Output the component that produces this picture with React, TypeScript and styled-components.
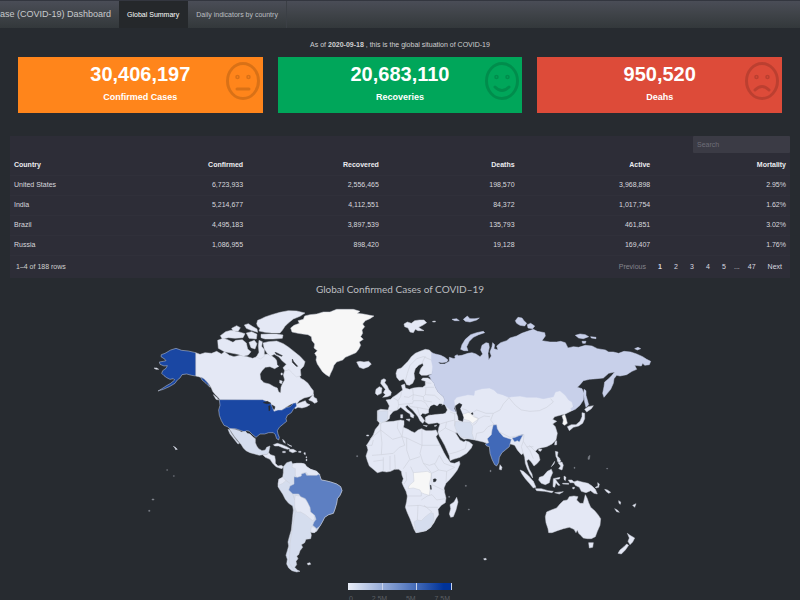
import React from "react";
import styled, { createGlobalStyle } from "styled-components";

const GlobalStyle = createGlobalStyle`
  * { box-sizing: border-box; }
  body {
    margin: 0;
    background: #272b30;
    color: #d0d0d0;
    font-family: "Liberation Sans", Arial, sans-serif;
    font-size: 7px;
    line-height: 10px;
  }
`;

const Page = styled.div`
  height: 100vh;
  overflow: hidden;
  display: flex;
  flex-direction: column;
`;

const Navbar = styled.nav`
  flex: none;
  display: flex;
  height: 28px;
  border-top: 1px solid #33363f;
  background: linear-gradient(#4a4d57, #3f4348 50%, #33383b);
`;

const Brand = styled.span`
  padding-right: 8px;
  font-size: 9px;
  line-height: 27px;
  white-space: nowrap;
  color: #c8cacc;
`;

const NavLink = styled.a<{ $active?: boolean }>`
  padding: 0 8px;
  line-height: 27px;
  text-decoration: none;
  white-space: nowrap;
  border-right: 1px solid ${(p) => (p.$active ? "#25282b" : "#3b3f45")};
  color: ${(p) => (p.$active ? "#ffffff" : "#bcbfc2")};
  background: ${(p) => (p.$active ? "#25282b" : "transparent")};
`;

const Summary = styled.p`
  flex: none;
  margin: 12px 0 7px;
  text-align: center;
`;

const Cards = styled.section`
  flex: none;
  display: grid;
  grid-template-columns: repeat(3, 1fr);
  gap: 15px;
  padding: 0 18px;
`;

const Card = styled.article<{ $color: string }>`
  position: relative;
  height: 56px;
  padding-top: 6px;
  text-align: center;
  font-weight: bold;
  color: #ffffff;
  background: ${(p) => p.$color};
`;

const CardValue = styled.div`
  font-size: 20px;
  line-height: 22px;
`;

const CardLabel = styled.div`
  margin-top: 5px;
  font-size: 9px;
  line-height: 14px;
`;

const Face = styled.svg`
  position: absolute;
  top: 4px;
  right: 2px;
  width: 36px;
  height: 40px;
  fill: none;
  stroke: rgba(0, 0, 0, 0.15);
  stroke-width: 3;
  stroke-linecap: round;
`;

const Panel = styled.section`
  flex: none;
  margin: 23px 10px 0;
  height: 142px;
  background: #2d2d37;
`;

const SearchBar = styled.div`
  display: flex;
  justify-content: flex-end;
`;

const SearchInput = styled.input`
  width: 97px;
  height: 17px;
  padding: 0 4px;
  border: 0;
  border-radius: 1px;
  background: #3b3b45;
  color: #c8c8c8;
  font: inherit;
  &::placeholder { color: #6e6e78; }
`;

const Table = styled.table`
  width: 100%;
  margin-top: 2px;
  table-layout: fixed;
  border-collapse: collapse;
`;

const Cell = styled.td`
  height: 20px;
  padding: 0 4px;
  border-bottom: 1px solid #30303a;
  text-align: right;
  color: #d8d8de;
  &:first-child { text-align: left; }
`;

const HeadCell = styled(Cell).attrs({ as: "th" })`
  font-weight: bold;
  color: #ececf0;
  &:first-child { width: 13%; }
`;

const Footer = styled.div`
  display: flex;
  align-items: center;
  justify-content: space-between;
  height: 22px;
  padding: 0 2px 0 6px;
`;

const Pages = styled.div`
  display: flex;
  align-items: center;
`;

const PageButton = styled.button<{ $current?: boolean }>`
  min-width: 16px;
  padding: 0 6px;
  border: 0;
  background: none;
  font: inherit;
  font-weight: ${(p) => (p.$current ? "bold" : "normal")};
  color: #dadae0;
  &:disabled { color: #85858d; }
`;

const Ellipsis = styled.span`
  padding: 0 2px;
`;

const MapTitle = styled.h2`
  flex: none;
  margin: 4px 0 0;
  text-align: center;
  font: 400 10px/14px Lato, sans-serif;
  color: #bcbec0;
`;

const WorldMap = styled.svg`
  flex: none;
  display: block;
  width: 100%;
  margin-top: 4px;
`;

const Legend = styled.div`
  flex: none;
  align-self: center;
  margin-top: 5px;
  width: 104px;
`;

const Scale = styled.div`
  display: grid;
  grid-template-columns: repeat(3, 1fr);
  height: 7px;
  background: linear-gradient(90deg, #e9edf7, #6c8bc8 50%, #003399 92%);
`;

const Tick = styled.span`
  border-right: 1px solid #c9d3ea;
`;

const ScaleLabels = styled.div`
  display: flex;
  justify-content: space-between;
  padding: 4px 2px 0 1px;
  color: #5b5f63;
`;

const LIGHT = "#e4e8f5";
const SOFT = "#d5ddee";
const BLANK = "#f7f7f7";
const RUSSIA = "#c8d0ea";
const BRAZIL = "#5d7fc2";
const INDIA = "#4169b8";
const USA = "#1a47a3";
const SEA = "#272b30";

type Shape = [fill: string, ...outlines: string[]];

interface Sheet {
  x: number;
  y: number;
  shapes: Shape[];
  borders?: string;
}

const sheets: Sheet[] = [
  {
    // North America
    x: 150,
    y: 300,
    shapes: [
      [
        LIGHT,
        "137,158 150,163 165,158 185,160 200,154 214,162 224,155 238,166 252,170 270,166 292,170 308,175 320,170 332,172 340,164 352,162 362,166 374,174 384,186 388,198 374,206 360,200 346,202 336,212 330,222 332,238 342,248 358,252 372,260 382,264 386,276 392,278 393,262 398,250 404,240 400,225 404,212 416,208 428,214 440,208 446,222 452,235 462,240 474,250 482,262 490,272 490,284 478,290 462,294 448,302 440,312 455,306 466,302 470,310 480,314 470,320 456,324 444,322 436,326 430,318 438,310 424,312 408,322 396,330 378,334 370,336 372,326 366,318 362,308 350,304 338,300 210,299 204,292 196,284 188,274 184,264 178,254 170,244 158,234 146,230 137,228",
        "476,300 484,290 490,282 492,292 500,296 502,306 494,310 486,304",
        "190,284 200,292 206,300 198,298",
      ],
      [
        USA,
        "137,158 115,153 95,151 78,145 62,150 45,160 34,164 33,170 45,178 48,182 40,184 28,186 30,193 42,198 52,197 48,205 38,212 35,220 42,227 50,233 60,238 70,236 74,240 62,250 48,258 36,266 24,273 40,268 58,260 75,250 82,240 90,234 96,224 110,222 125,226 137,228",
        "152,232 162,236 174,250 180,262 168,250 156,240",
        "208,299 338,299 352,306 362,310 366,318 372,334 384,330 396,330 410,322 420,320 430,310 438,308 440,318 430,328 424,338 412,346 408,356 410,364 400,372 388,382 382,392 384,402 388,412 386,420 380,416 376,404 370,398 356,398 344,402 330,402 318,412 308,404 298,394 290,392 284,396 268,390 256,386 240,386 232,380 222,376 214,362 208,346 206,330 210,316",
      ],
      [LIGHT, "12,204 20,204 26,208 18,208"],
      [SEA, "340,308 352,304 362,310 350,311", "356,318 360,317 360,330 357,333", "366,315 375,320 373,328 369,323"],
    ],
  },
  {
    // Canadian Arctic islands
    x: 205,
    y: 303,
    shapes: [
      [
        LIGHT,
        "155,62 158,52 168,48 180,42 200,35 225,28 250,23 275,24 300,30 285,40 265,48 250,60 240,70 232,82 225,90 200,90 180,88 162,84 165,76 158,70",
        "168,94 190,93 215,93 234,96 232,106 205,108 180,108 168,104",
        "118,66 130,62 142,70 156,78 158,88 138,82 124,76",
        "80,76 95,68 106,74 100,84 84,84",
        "46,98 62,86 78,82 100,86 120,92 114,104 90,106 70,104 52,108",
        "124,90 140,86 156,94 154,108 132,106",
        "38,112 55,106 68,110 84,118 92,112 112,110 124,120 128,138 138,146 130,156 115,160 98,154 78,150 58,146 40,136",
        "132,118 148,112 156,122 150,138 138,134",
        "162,112 172,116 170,130 178,140 178,160 166,168 154,162 162,148 160,130",
        "174,120 190,116 215,114 235,122 250,132 268,146 285,160 300,176 296,190 286,200 288,218 274,222 262,210 252,200 240,204 234,194 244,184 232,174 222,162 208,154 196,160 186,150 178,138",
        "228,210 232,210 232,216 228,216",
        "224,232 232,234 230,242 224,240",
      ],
      [SEA, "210,148 216,150 232,158 230,160 214,154", "262,168 266,176 278,190 274,190 262,178", "216,172 221,174 224,190 218,186"],
    ],
  },
  {
    // Central and South America
    x: 140,
    y: 420,
    shapes: [
      [
        SOFT,
        "268,26 284,28 298,32 304,36 316,34 322,40 330,42 340,52 346,56 346,68 350,78 356,86 366,92 376,90 380,82 390,78 388,88 386,98 380,104 368,104 358,106 344,102 330,98 318,92 310,84 304,74 294,62 284,50 276,38",
        "264,28 269,30 276,42 284,53 291,62 298,70 294,72 286,62 278,52 270,42",
        "430,140 440,128 454,124 458,132 470,130 484,130 494,132 500,140 512,148 530,154 538,164 544,180 556,182 572,186 590,192 602,200 606,212 600,226 592,236 590,250 584,270 580,280 566,284 554,292 548,304 540,318 530,334 520,338 512,336 514,346 512,356 498,358 494,368 484,374 488,382 480,392 476,404 470,408 474,416 468,424 470,434 464,442 472,450 480,454 470,456 456,452 446,444 440,432 442,418 438,406 442,392 446,378 444,366 448,350 454,330 456,310 458,290 460,270 458,258 446,250 436,238 428,222 420,210 414,200 414,190 418,178 428,172 430,158",
      ],
      [
        LIGHT,
        "368,104 380,104 386,98 392,104 404,108 406,120 406,130 414,138 424,136 430,140 426,146 418,144 408,140 398,130 390,118 376,112",
        "400,74 412,70 426,74 440,80 450,86 442,88 430,84 416,78 404,78",
        "448,88 460,88 470,94 458,98 448,94",
        "428,94 436,94 436,98 428,98",
        "476,94 483,94 483,97 476,97",
        "428,58 434,64 436,70 430,66",
        "442,72 456,79 450,78",
        "492,98 496,98 496,104 492,102",
        "498,110 500,110 500,114 498,114",
        "498,118 501,118 501,122 498,122",
        "458,132 470,130 484,130 494,132 500,140 512,148 530,154 540,164 530,168 516,166 506,168 500,158 486,160 484,172 472,174 466,166 466,146 456,142",
        "466,226 480,228 496,238 504,248 510,262 512,276 522,284 524,296 518,302 508,294 496,284 482,276 470,276 464,260 464,240",
        "514,320 524,322 530,330 524,338 512,336",
        "416,178 428,172 438,182 428,190 416,196",
        "502,430 510,428 512,433 504,435",
        "100,79 106,82 112,88 107,89 105,84",
      ],
      ["#80848c", "36,237 42,237 42,240 36,240", "26,271 30,271 30,274 26,274", "80,149 83,149 83,151 80,151", "100,167 103,167 103,169 100,169"],
      [
        BRAZIL,
        "462,170 472,172 484,168 484,162 496,158 500,166 512,166 530,166 538,162 544,180 556,182 572,186 590,192 602,200 606,212 600,226 592,236 590,250 584,270 580,280 566,284 554,292 548,304 540,318 530,326 518,316 522,306 528,298 524,286 512,276 510,262 502,246 496,236 482,230 476,222 458,222 446,210 450,198 462,192",
      ],
    ],
    borders: "M460,262L466,276L458,320L450,370L448,430L462,450M436,180L450,190M458,222L464,240",
  },
  {
    // Greenland, Iceland and Svalbard
    x: 270,
    y: 300,
    shapes: [
      [
        BLANK,
        "62,84 72,76 88,70 84,62 100,58 104,48 120,44 140,42 160,36 180,36 200,28 225,28 250,28 270,34 262,40 280,42 300,46 312,48 300,56 286,62 278,72 284,80 276,90 278,100 272,110 280,118 268,126 272,136 266,148 258,158 240,166 226,172 218,180 200,186 192,196 188,208 182,220 178,230 168,224 158,216 150,204 142,192 138,180 140,170 134,160 142,152 132,144 134,132 126,122 124,110 114,104 98,102 84,100 66,96",
      ],
      [
        LIGHT,
        "260,186 270,184 282,186 296,184 304,192 296,200 280,206 268,202 264,194",
        "402,72 412,66 424,70 434,62 448,60 462,60 470,68 458,76 446,82 452,86 462,92 444,92 436,88 430,98 420,96 414,84 404,80",
        "488,64 496,63 496,66 488,66",
      ],
    ],
  },
  {
    // Africa
    x: 340,
    y: 420,
    shapes: [
      [
        LIGHT,
        "122,2 132,6 160,4 182,0 192,2 192,14 190,22 204,28 214,34 224,38 234,30 244,26 258,32 276,32 288,30 294,42 288,50 296,66 304,82 312,98 320,112 326,120 332,128 344,130 358,124 360,132 352,150 340,166 328,180 318,190 312,204 314,218 318,234 316,248 304,256 294,268 296,284 288,296 282,308 272,322 258,332 240,336 228,338 222,328 216,312 210,296 202,278 196,262 200,244 202,228 198,214 190,198 186,188 190,176 186,166 184,154 176,148 164,148 152,154 140,156 128,154 112,158 100,148 88,138 82,122 78,108 84,90 80,76 90,60 100,44 106,28 116,16",
        "350,232 354,246 348,270 340,290 332,292 328,282 332,266 330,254 342,246",
        "80,45 86,45 86,48 80,48",
        "431,416 438,415 439,419 433,420",
      ],
      ["#80848c", "50,107 53,107 53,110 50,110", "385,267 388,267 388,270 385,270", "376,196 379,196 379,199 376,199", "326,229 329,229 329,232 326,232"],
      [BLANK, "220,158 244,156 262,154 274,160 272,176 268,192 270,210 268,226 254,222 244,218 240,210 220,204 204,206 208,196 222,184"],
      [SOFT, "222,306 232,300 244,302 256,290 272,278 280,280 282,300 272,322 258,332 240,336 228,338"],
      [SEA, "280,178 286,176 289,179 287,184 281,186", "271,196 273,196 274,208 272,208"],
    ],
    borders:
      "M122,2L122,30L90,58M122,30L158,58L186,50L172,24L174,4M186,50L194,76L178,82L160,100L124,104M122,30L126,70L124,104L96,106M190,22L186,50L200,54L246,76L246,26M246,76H302M246,76L240,100L250,130L268,136L286,130L298,106M200,54L200,90L210,120L240,110M208,120L190,146M130,112L130,152M150,108L150,150M164,104L166,148M100,124L130,120M250,130L274,158M274,160L296,150L320,154M296,150L284,132M298,106L312,130L344,142L320,154L318,186M274,160L276,194L314,212M202,228H244V218M244,240L262,228L276,224L290,240L316,236M202,258L240,256L262,262L294,262M234,256L232,300M252,256L276,276M198,156L200,180L192,192M220,158L212,140M78,76L96,76L100,60",
  },
  {
    // Europe and Asia
    x: 360,
    y: 300,
    shapes: [
      [
        LIGHT,
        "64,240 72,236 78,240 74,248 82,258 86,268 94,276 92,286 82,290 68,292 76,284 70,278 76,268 68,258 62,250",
        "48,268 58,260 66,264 64,280 52,286 46,280",
        "108,220 112,208 124,204 132,196 144,184 154,170 166,160 180,154 196,148 208,150 216,158 222,200 216,222 200,226 184,226 178,220 182,206 190,196 188,190 176,196 166,206 162,220 164,236 158,250 148,256 140,254 136,246 130,238 118,242 110,232",
        "52,332 62,328 84,330 88,318 82,306 78,300 92,298 98,292 110,284 120,276 128,270 124,256 134,252 136,264 148,268 160,264 176,262 188,262 196,256 196,244 184,240 188,234 204,234 214,240 222,250 226,262 234,276 250,290 254,300 254,312 244,316 230,318 222,314 212,318 206,328 206,338 196,342 188,340 182,346 188,354 194,362 188,370 180,362 174,350 166,340 158,330 148,322 142,316 136,320 142,328 152,336 162,346 160,354 152,350 150,342 140,336 130,328 122,322 112,330 100,334 90,346 88,356 78,364 66,368 62,372 52,362 52,346",
        "138,358 150,357 148,364",
        "122,344 128,344 128,354 122,354",
        "190,376 202,377 200,380",
        "222,378 230,375 228,379",
        "196,352 206,346 220,344 240,342 256,340 262,330 254,312 260,290 300,270 420,250 590,250 650,290 640,322 636,332 616,342 600,346 584,350 578,358 590,364 578,372 586,380 592,400 588,420 576,432 560,440 542,444 534,446 526,454 536,464 540,480 532,490 522,498 514,486 506,478 500,482 504,496 508,508 516,522 518,534 510,522 502,506 496,490 494,472 490,460 484,464 472,450 464,436 452,432 400,440 380,430 370,426 344,420 324,416 312,418 302,412 292,398 286,398 290,404 300,420 312,426 316,422 328,426 338,434 334,444 320,460 300,472 280,478 270,482 268,468 262,454 254,436 244,418 238,408 234,396 236,384 240,372 232,368 220,370 206,372 196,366",
        "674,328 684,320 700,317 694,326 680,336",
        "666,338 674,340 674,356 668,370 656,378 640,382 628,392 622,380 634,374 648,374 660,364 666,350",
        "585,425 590,422 590,434 584,435",
        "536,447 546,448 542,454 536,452",
        "420,494 426,502 424,510 418,508",
      ],
      [
        RUSSIA,
        "215,158 226,162 242,166 254,172 264,180 260,186 246,188 234,186 240,192 254,192 268,184 268,172 282,176 290,168 306,166 324,160 336,158 348,162 360,170 368,162 362,150 366,136 378,128 386,130 388,142 384,160 386,180 394,168 390,156 396,140 398,128 404,134 402,146 414,150 410,138 422,128 440,122 450,114 470,108 485,100 502,94 520,88 532,94 554,98 556,108 546,122 570,126 590,126 602,124 616,128 624,144 640,140 656,142 676,136 696,138 712,146 736,150 746,156 760,156 776,160 792,154 812,156 830,162 848,170 860,178 872,184 868,194 854,196 848,190 844,198 824,196 830,208 816,214 800,224 780,228 770,226 762,236 760,250 752,268 742,280 732,292 728,280 732,260 734,246 746,236 756,226 764,216 746,220 730,234 710,236 688,238 670,242 660,254 652,262 666,266 672,280 670,300 660,316 646,328 636,332 632,326 640,320 636,306 626,300 616,286 600,272 586,276 580,290 550,296 530,292 500,292 480,288 456,290 446,292 428,284 412,280 402,270 388,264 366,266 344,272 342,286 324,284 306,288 290,292 282,302 284,316 288,336 274,332 262,322 250,310 254,300 250,290 234,276 226,262 222,250 214,240 210,232 206,228 216,222 218,200 214,180",
        "302,148 306,134 316,118 332,104 350,98 370,94 374,98 356,104 340,112 328,124 320,140 324,152 312,152",
        "466,62 474,52 486,54 492,62 500,70 494,78 480,76 470,70",
        "502,74 512,70 524,78 518,86 504,84",
        "276,58 290,56 298,62 284,62",
        "310,58 322,48 330,56 345,56 358,54 350,60 330,66 316,64",
        "646,106 660,102 676,104 686,110 670,116 656,114",
        "692,110 708,112 708,116 694,114",
        "666,124 678,124 676,130 668,130",
        "824,146 834,142 842,146 832,150",
        "672,268 678,272 678,286 682,300 686,314 678,322 674,306 672,290",
        "284,168 292,164 294,170 286,172",
      ],
      [SOFT, "54,334 84,332 82,360 64,368 54,360", "286,364 310,366 330,366 338,380 336,400 342,418 324,416 302,410 290,394 284,378"],
      [BLANK, "306,344 322,338 334,336 342,348 356,356 346,364 338,370 328,362 312,358", "606,348 614,343 618,354 622,370 614,376 608,372 610,360"],
      [
        INDIA,
        "400,374 410,374 412,386 418,396 430,410 448,416 454,418 452,426 448,440 436,450 426,458 418,472 416,488 410,498 404,494 396,478 390,460 388,440 380,438 376,432 386,428 382,416 394,404 396,390",
        "456,414 466,412 478,406 490,403 484,414 478,426 472,422 464,426 460,420",
      ],
      [
        SEA,
        "208,336 212,320 222,315 232,320 238,312 246,313 242,320 254,332 250,340 232,339 214,343",
        "286,318 298,310 306,314 300,326 306,340 310,352 308,364 296,360 294,348 288,334 284,326",
        "334,340 338,338 339,343 335,343",
      ],
    ],
    borders:
      "M446,292L456,304L466,316L484,330L510,334L538,332L560,322L580,306L572,296M446,294L430,312L420,330L400,340L392,360L404,376M340,336L350,330L378,340L400,340M306,326L320,330L340,350L356,356L372,348L390,350M418,396L450,412L492,404M492,404L490,424L500,440L520,440M490,424L484,440L490,462M500,440L510,452L520,476M508,436L526,454M356,356L348,370L338,376M346,420L350,400L370,396L384,380L400,374M284,316L290,340M240,372L260,366L284,360M260,366L256,384L238,396M256,384L290,400M284,340L284,378M270,336L286,342M268,462L290,456L316,446L320,426M88,332L100,334M98,292L114,302L116,316L112,328M124,276L122,290L114,302M158,266L160,284L146,292L132,290M116,314L134,312L158,310L160,302L184,302L196,308L206,324M160,284L190,290L196,284L198,264M160,284L158,300M190,290L192,302L216,306M146,310L150,320L172,322L176,336L180,348M172,322L190,326L206,328M194,262L222,262M196,284L224,286L240,300M136,242L142,220L150,196L170,176L190,170L214,180M196,168L186,190M196,248L214,250",
  },
  {
    // Oceania and South-East Asia
    x: 480,
    y: 420,
    shapes: [
      [
        LIGHT,
        "196,290 200,276 214,270 230,264 240,252 250,242 262,240 268,230 282,228 294,230 290,240 300,250 310,250 314,232 316,224 322,236 326,248 332,262 344,272 354,284 362,296 360,316 352,334 346,350 334,356 322,356 310,354 302,346 296,340 292,330 288,338 282,328 268,322 250,326 232,332 216,338 206,338 204,326 198,308",
        "326,368 340,368 338,382 328,384",
        "442,340 450,346 464,354 458,366 450,374 444,364 448,354",
        "440,372 446,376 436,390 424,402 414,400 420,390 432,380",
        "120,150 130,154 146,168 160,184 168,202 160,204 148,190 136,176 126,162",
        "166,206 184,206 204,212 220,214 216,218 194,214 170,212",
        "178,172 190,168 202,154 214,148 218,158 212,172 208,188 196,194 184,190 176,180",
        "220,176 240,172 238,177 226,178 232,186 240,196 234,196 228,188 224,202 219,200",
        "280,186 292,182 306,186 324,190 336,198 346,208 352,222 342,220 332,212 318,218 304,214 298,202 286,196",
        "265,180 276,180 284,188 270,188",
        "346,202 354,198 353,188 358,192 356,202 348,204",
        "374,208 382,210 392,217 386,220 378,214",
        "226,94 234,96 232,108 240,116 234,120 228,110",
        "234,128 246,126 250,136 246,150 236,146 242,138",
        "214,140 224,124 222,132",
        "232,114 242,120 240,128 232,124",
        "224,218 250,215 238,222",
        "252,168 258,172 256,182 252,178",
        "248,190 266,190 266,193 248,192",
        "278,202 284,202 282,207 278,206",
        "416,242 422,246 421,253 417,250",
        "404,266 412,270 418,277 410,275",
        "458,256 468,251 464,262",
      ],
      ["#80848c", "282,142 285,142 285,145 282,145", "380,145 383,145 383,147 380,147", "325,110 330,106 328,118 324,118", "30,151 33,151 33,155 30,155"],
    ],
  },
];

const outlineColor = (fill: string) => (fill === SEA || fill === RUSSIA || fill.startsWith("#8") ? fill : "#cdd1da");

const WorldChart = () => (
  <WorldMap viewBox="0 300 800 278" role="img" aria-label="Global confirmed cases by country">
    {sheets.map((sheet) => (
      <g key={`${sheet.x}-${sheet.y}`} transform={`translate(${sheet.x} ${sheet.y}) scale(0.33333)`} strokeLinejoin="round">
        {sheet.shapes.map(([fill, ...outlines], i) => (
          <g key={i} fill={fill} stroke={outlineColor(fill)} strokeWidth={1.5}>
            {outlines.map((points) => (
              <polygon key={points} points={points} />
            ))}
          </g>
        ))}
        {sheet.borders && <path d={sheet.borders} fill="none" stroke="#ccd0da" strokeWidth={1.8} />}
      </g>
    ))}
  </WorldMap>
);

const cards = [
  { value: "30,406,197", label: "Confirmed Cases", color: "#ff851b", mouth: "M12 28H24" },
  { value: "20,683,110", label: "Recoveries", color: "#00a65a", mouth: "M11 26Q18 33 25 26" },
  { value: "950,520", label: "Deahs", color: "#dd4b39", mouth: "M11 29Q18 22 25 29" },
];

const columns = ["Country", "Confirmed", "Recovered", "Deaths", "Active", "Mortality"];

const rows = [
  ["United States", "6,723,933", "2,556,465", "198,570", "3,968,898", "2.95%"],
  ["India", "5,214,677", "4,112,551", "84,372", "1,017,754", "1.62%"],
  ["Brazil", "4,495,183", "3,897,539", "135,793", "461,851", "3.02%"],
  ["Russia", "1,086,955", "898,420", "19,128", "169,407", "1.76%"],
];

export default function App() {
  return (
    <Page>
      <GlobalStyle />
      <Navbar>
        <Brand>ase (COVID-19) Dashboard</Brand>
        <NavLink href="#summary" $active>Global Summary</NavLink>
        <NavLink href="#daily">Daily indicators by country</NavLink>
      </Navbar>
      <Summary>
        As of <b>2020-09-18</b> , this is the global situation of COVID-19
      </Summary>
      <Cards>
        {cards.map((card) => (
          <Card key={card.label} $color={card.color}>
            <CardValue>{card.value}</CardValue>
            <CardLabel>{card.label}</CardLabel>
            <Face viewBox="0 0 36 40" aria-hidden="true">
              <ellipse cx="18" cy="20" rx="15.5" ry="17.5" />
              <circle cx="12.5" cy="16" r="0.8" />
              <circle cx="23.5" cy="16" r="0.8" />
              <path d={card.mouth} />
            </Face>
          </Card>
        ))}
      </Cards>
      <Panel>
        <SearchBar>
          <SearchInput type="text" placeholder="Search" aria-label="Search" />
        </SearchBar>
        <Table>
          <thead>
            <tr>
              {columns.map((name) => (
                <HeadCell key={name}>{name}</HeadCell>
              ))}
            </tr>
          </thead>
          <tbody>
            {rows.map((row) => (
              <tr key={row[0]}>
                {row.map((value, i) => (
                  <Cell key={columns[i]}>{value}</Cell>
                ))}
              </tr>
            ))}
          </tbody>
        </Table>
        <Footer>
          <span>1–4 of 188 rows</span>
          <Pages>
            <PageButton disabled>Previous</PageButton>
            <PageButton $current>1</PageButton>
            <PageButton>2</PageButton>
            <PageButton>3</PageButton>
            <PageButton>4</PageButton>
            <PageButton>5</PageButton>
            <Ellipsis>...</Ellipsis>
            <PageButton>47</PageButton>
            <PageButton>Next</PageButton>
          </Pages>
        </Footer>
      </Panel>
      <MapTitle>Global Confirmed Cases of COVID–19</MapTitle>
      <WorldChart />
      <Legend>
        <Scale>
          <Tick />
          <Tick />
          <Tick />
        </Scale>
        <ScaleLabels>
          <span>0</span>
          <span>2.5M</span>
          <span>5M</span>
          <span>7.5M</span>
        </ScaleLabels>
      </Legend>
    </Page>
  );
}
